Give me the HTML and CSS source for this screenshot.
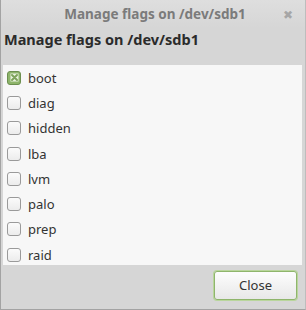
FILE: index.html
```html
<!DOCTYPE html>
<html lang="en">
<head>
  <meta charset="UTF-8" />
  <title>Manage flags on /dev/sdb1</title>
  <link rel="stylesheet" href="styles.css">
</head>
<body>

<div class="window">
  <div class="titlebar">
    <span class="title">Manage flags on /dev/sdb1</span>
    <span class="close-x" title="Close">&#10006;</span>
  </div>

  <div class="heading">Manage flags on /dev/sdb1</div>

  <ul class="flags">
    <li><span class="check checked">
      <svg width="9" height="9" viewBox="0 0 9 9"><rect x="0.5" y="0.5" width="8" height="8" fill="#e9f2df"/><path d="M2 2 L7 7 M7 2 L2 7" stroke="#7ea35c" stroke-width="2" stroke-linecap="round"/></svg>
    </span>boot</li>
    <li><span class="check"></span>diag</li>
    <li><span class="check"></span>hidden</li>
    <li><span class="check"></span>lba</li>
    <li><span class="check"></span>lvm</li>
    <li><span class="check"></span>palo</li>
    <li><span class="check"></span>prep</li>
    <li><span class="check"></span>raid</li>
  </ul>

  <div class="actions">
    <button class="btn">Close</button>
  </div>
</div>

</body>
</html>
```

FILE: styles.css
```css
* {
  box-sizing: border-box;
}
body {
  margin: 0;
  font-family: "Noto Sans", "DejaVu Sans", sans-serif;
  background: #d6d6d6;
}
.window {
  width: 306px;
  height: 310px;
  background: #d6d6d6;
  border-left: 1px solid #a3a3a3;
  border-bottom: 1px solid #a3a3a3;
  border-right: 1px solid #bdbdbd;
  display: flex;
  flex-direction: column;
}

/* title bar */
.titlebar {
  height: 28px;
  position: relative;
  display: flex;
  align-items: center;
  justify-content: center;
  background: linear-gradient(#dedede, #d6d6d6);
}
.title {
  font-size: 13.5px;
  font-weight: bold;
  color: #7b7b7b;
  margin-left: 4px;
}
.close-x {
  position: absolute;
  right: 12px;
  top: 6px;
  font-size: 12px;
  color: #a6a6a6;
}

.heading {
  font-size: 14.5px;
  font-weight: bold;
  color: #2b2b2b;
  padding: 1px 0 0 3px;
  height: 37px;
}

/* flag list */
.flags {
  list-style: none;
  margin: 0 3px 0 2px;
  padding: 0;
  background: #f7f7f7;
  height: 200px;
}
.flags li {
  height: 25.3px;
  display: flex;
  align-items: center;
  padding-left: 4px;
  font-size: 13px;
  color: #333;
}
.check {
  width: 14px;
  height: 14px;
  border: 1px solid #9a9a9a;
  border-radius: 3px;
  background: linear-gradient(#fbfbfb, #ececec);
  margin-right: 7px;
  display: flex;
  align-items: center;
  justify-content: center;
}
.check.checked {
  background: #8db46a;
  border-color: #6c8f4f;
}

/* buttons */
.actions {
  flex: 1;
  display: flex;
  justify-content: flex-end;
  align-items: center;
  padding-right: 8px;
  padding-bottom: 4px;
}
.btn {
  width: 83px;
  height: 29px;
  font-family: "Noto Sans", "DejaVu Sans", sans-serif;
  font-size: 13px;
  color: #333;
  background: linear-gradient(#fdfdfd, #e8e8e8);
  border: 1px solid #8fb56c;
  border-radius: 3px;
  box-shadow: 0 0 0 1px #b9d69c;
}
```
